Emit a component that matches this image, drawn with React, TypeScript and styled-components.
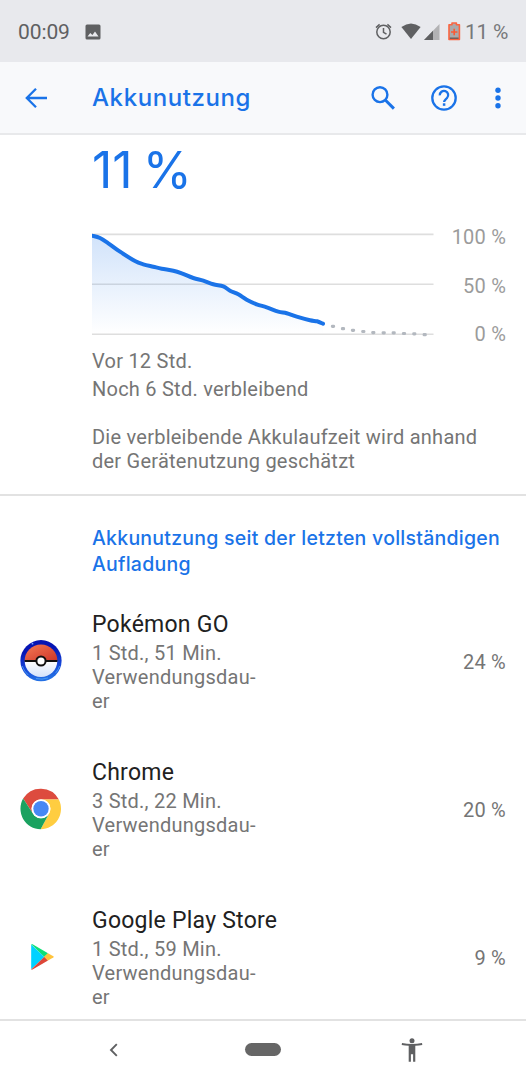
import React from 'react';
import styled, { createGlobalStyle } from 'styled-components';

const BLUE = '#1a73e8';
const GREY = '#5f6062';

const GlobalStyle = createGlobalStyle`
  * { box-sizing: border-box; }
  body { margin: 0; background: #fff; }
`;

const Screen = styled.div`
  width: 526px;
  height: 1080px;
  display: flex;
  flex-direction: column;
  overflow: hidden;
  background: #fff;
  font-family: Roboto, 'Liberation Sans', sans-serif;
`;

const StatusBar = styled.header`
  height: 62px;
  flex: none;
  display: flex;
  align-items: center;
  padding: 1px 18px 0;
  background: #e8e9ed;
  color: #5f6062;
  font-size: 21px;
  line-height: 24px;
`;

const Clock = styled.span`
  letter-spacing: -0.1px;
  width: 67px;
`;

const StatusIcons = styled.div`
  margin-left: auto;
  display: flex;
  align-items: center;
  svg { display: block; }
`;

const Level = styled.span`
  width: 43px;
  white-space: nowrap;
  letter-spacing: -0.3px;
  color: #77787a;
`;

const AppBar = styled.div`
  height: 73px;
  flex: none;
  display: flex;
  align-items: center;
  background: #f8f9fb;
  border-bottom: 2px solid #e8e9eb;
  padding: 1px 12px 0 20px;
  svg { display: block; }
`;

const Title = styled.h1`
  margin: 0 auto 0 40px;
  font: 500 24px/32px Inter, sans-serif;
  letter-spacing: 0.6px;
  color: ${BLUE};
`;

const Action = styled.button<{ $gap?: number }>`
  border: 0;
  padding: 0;
  background: none;
  margin-left: ${(p) => p.$gap ?? 0}px;
`;

const Content = styled.main`
  flex: 1;
  min-height: 0;
  overflow: hidden;
`;

const Summary = styled.section`
  height: 361px;
  padding: 5px 20px 0 92px;
  border-bottom: 2px solid #e2e2e2;
`;

const BigLevel = styled.div`
  font: 400 50px/60px Inter, sans-serif;
  letter-spacing: 0;
  word-spacing: -4px;
  color: ${BLUE};
`;

const ChartRow = styled.div`
  display: flex;
  justify-content: space-between;
  height: 120px;
  margin-top: 25px;
`;

const AxisLabels = styled.div`
  display: flex;
  flex-direction: column;
  justify-content: space-between;
  text-align: right;
  height: 121px;
  color: #9b9b9b;
  font-size: 20px;
  line-height: 24px;
  letter-spacing: 0.2px;
`;

const Line = styled.p<{ $height?: number; $top?: number }>`
  margin: ${(p) => p.$top ?? 0}px 0 0;
  font-size: 20px;
  line-height: ${(p) => p.$height ?? 24}px;
  letter-spacing: 0.24px;
  color: #757575;
  white-space: nowrap;
`;

const SectionTitle = styled.h2`
  margin: 0;
  padding: 29px 0 0 92px;
  height: 91px;
  font: 500 19.5px/26px Inter, sans-serif;
  letter-spacing: 0.25px;
  color: ${BLUE};
  white-space: nowrap;
`;

const AppRow = styled.div`
  height: 148px;
  display: grid;
  grid-template-columns: 72px 1fr auto;
  align-items: center;
  padding: 0 20px;
`;

const AppName = styled.div`
  margin-bottom: 1px;
  font-size: 23px;
  line-height: 30px;
  letter-spacing: 0.24px;
  color: #212121;
`;

const AppIcon = styled.svg`
  display: block;
`;

const Percent = styled.div`
  margin-top: 2px;
  font-size: 20px;
  line-height: 24px;
  letter-spacing: 0.24px;
  color: #757575;
`;

const NavBar = styled.nav`
  height: 61px;
  flex: none;
  display: flex;
  justify-content: space-between;
  align-items: center;
  border-top: 2px solid #e2e2e2;
  padding: 0 103px 2px 105px;
`;

const Pill = styled.div`
  width: 36px;
  height: 13px;
  margin-left: 2px;
  border-radius: 7px;
  background: #666;
`;

const history: [number, number][] = [
  [0, 5.7], [8, 8], [16.3, 13.3], [28, 21.7], [43, 31], [51.3, 34.3], [61.3, 36.7], [69.7, 38.7],
  [81.3, 40.7], [89.7, 43.3], [101.3, 48], [111.3, 50.7], [121.3, 54.3], [131.3, 56.3], [138, 60.7],
  [146.3, 64.3], [154.7, 69.7], [164.7, 74.3], [174.7, 77.3], [186.3, 81.7], [194.7, 83.3],
  [204.7, 86.7], [218, 90.3], [225, 91.3], [231, 93.7],
];

const forecast: [number, number][] = [
  [241, 96.3], [251, 98.7], [261, 100.3], [271.3, 101.5], [281.3, 102.6], [291.7, 102.8],
  [301.7, 102.9], [312, 103.5], [322.3, 103.9], [332.7, 104.7],
];

const smooth = (pts: [number, number][]) =>
  pts.reduce((d, p, i) => {
    if (i === 0) return `M${p[0]} ${p[1]}`;
    const a = pts[Math.max(0, i - 2)];
    const b = pts[i - 1];
    const c = pts[Math.min(pts.length - 1, i + 1)];
    return `${d}C${b[0] + (p[0] - a[0]) / 6} ${b[1] + (p[1] - a[1]) / 6} ${p[0] - (c[0] - b[0]) / 6} ${p[1] - (c[1] - b[1]) / 6} ${p[0]} ${p[1]}`;
  }, '');

const Chart = () => {
  const curve = smooth(history);
  return (
    <svg width="342" height="120" viewBox="0 -5 342 120">
      <defs>
        <linearGradient id="fade" x1="0" y1="0" x2="0" y2="1">
          <stop offset="0" stopColor={BLUE} stopOpacity="0.2" />
          <stop offset="1" stopColor={BLUE} stopOpacity="0" />
        </linearGradient>
        <clipPath id="area"><rect x="0" y="0" width="342" height="115" /></clipPath>
      </defs>
      {[4.4, 54.2, 104.2].map((y) => (
        <line key={y} x1="0" x2="341.5" y1={y} y2={y} stroke="#dedede" strokeWidth="1.6" />
      ))}
      <path d={`${curve}V104H0Z`} fill="url(#fade)" />
      <path d={curve} fill="none" stroke={BLUE} strokeWidth="4" strokeLinecap="round" clipPath="url(#area)" />
      {forecast.map(([x, y]) => (
        <rect key={x} x={x - 2.1} y={y - 1.6} width="4.2" height="3.2" rx="1.4" fill="#b3b8bf" />
      ))}
    </svg>
  );
};

const PokemonIcon = () => (
  <AppIcon width="42" height="42" viewBox="0 0 42 42">
    <defs>
      <linearGradient id="ring" x1="0" y1="0" x2="0.15" y2="1">
        <stop offset="0.3" stopColor="#0615b4" />
        <stop offset="0.7" stopColor="#1545d8" />
        <stop offset="1" stopColor="#2470e4" />
      </linearGradient>
      <linearGradient id="red" x1="0" y1="0" x2="1" y2="1">
        <stop offset="0" stopColor="#f47b55" />
        <stop offset="1" stopColor="#cf3529" />
      </linearGradient>
      <linearGradient id="white" x1="0" y1="0" x2="0" y2="1">
        <stop offset="0" stopColor="#fff" />
        <stop offset="1" stopColor="#d5e3fa" />
      </linearGradient>
    </defs>
    <circle cx="21" cy="20.7" r="20.6" fill="url(#ring)" />
    <path d="M2.3 26a19.5 19.5 0 0 0 6 9M39.6 26a19.5 19.5 0 0 1-4 7M16 38.5q6 1.6 12-.6" fill="none" stroke="#58aef5" strokeWidth="1" strokeOpacity="0.7" />
    <circle cx="12.5" cy="3.7" r="0.9" fill="#7ba5ff" />
    <path d="M4.7 20.7a16.3 16.3 0 0 1 32.6 0z" fill="url(#red)" />
    <path d="M4.7 20.7a16.3 16.3 0 0 0 32.6 0z" fill="url(#white)" />
    <path d="M4.6 21h32.8" stroke="#111" strokeWidth="2" />
    <circle cx="21" cy="21" r="4.6" fill="#fff" stroke="#111" strokeWidth="2" />
  </AppIcon>
);

const ChromeIcon = () => (
  <AppIcon width="42" height="42" viewBox="0 0 42 42">
    <path d="M3.1 10.6A20.6 20.6 0 0 1 38.8 11.4H21A9.4 9.4 0 0 0 12.9 25.5z" fill="#dd4b3e" />
    <path d="M38.8 11.4A20.6 20.6 0 0 1 20.6 41.3L29.1 25.5A9.4 9.4 0 0 0 21 11.4z" fill="#ffcd40" />
    <path d="M3.1 10.6A20.6 20.6 0 0 0 20.6 41.3L29.1 25.5A9.4 9.4 0 0 1 12.9 25.5z" fill="#1aa260" />
    <circle cx="21" cy="20.7" r="9.5" fill="#fff" />
    <circle cx="21" cy="20.7" r="7.7" fill="#4688f4" />
  </AppIcon>
);

const PlayIcon = () => (
  <AppIcon width="42" height="42" viewBox="0 0 42 42">
    <path d="M11.2 8.4L24.4 21 11.2 33.2z" fill="#00d2ff" />
    <path d="M11.2 8.3q.8-.5 1.8.1L28 17.2 24.4 21z" fill="#0ee077" />
    <path d="M11.2 33.4q.8.5 1.8-.1L28 24.5 24.4 20.7z" fill="#dd4638" />
    <path d="M28 17.2l5.3 3q1.2.7 0 1.4L28 24.6l-4-3.8z" fill="#ffc33c" />
  </AppIcon>
);

const apps = [
  { name: 'Pokémon GO', time: '1 Std., 51 Min.', percent: '24 %', Icon: PokemonIcon },
  { name: 'Chrome', time: '3 Std., 22 Min.', percent: '20 %', Icon: ChromeIcon },
  { name: 'Google Play Store', time: '1 Std., 59 Min.', percent: '9 %', Icon: PlayIcon },
];

export default function App() {
  return (
    <Screen>
      <GlobalStyle />
      <StatusBar>
        <Clock>00:09</Clock>
        <svg width="16" height="16" viewBox="0 0 16 16">
          <path fillRule="evenodd" d="M2 .5h12a1.5 1.5 0 0 1 1.5 1.5v12a1.5 1.5 0 0 1-1.5 1.5H2A1.5 1.5 0 0 1 .5 14V2A1.5 1.5 0 0 1 2 .5zM2.5 12.6h11L10 7.6l-2.6 3.3L5.3 8.9z" fill={GREY} />
        </svg>
        <StatusIcons>
          <svg width="90" height="24" viewBox="0 0 90 24">
            <g fill="none" stroke={GREY} strokeWidth="1.5">
              <circle cx="8.5" cy="12" r="6.7" />
              <path d="M8.5 8v4.4l3 1.8M1 7.6l3.6-3.2M16 7.6l-3.6-3.2" />
            </g>
            <path d="M26.4 7q9.6-7 19.2 0L36 19z" fill={GREY} />
            <path d="M64.5 4v16H49z" fill="#b2b2b4" />
            <path d="M58 10.7V20h-9z" fill={GREY} />
            <path d="M77 3h4.4v1.8h3v14.700h-10.400v-14.700h3z" fill="#aaaaac" stroke="#fb6440" strokeWidth="1.6" strokeLinejoin="round" />
            <path d="M74.800 18.200h8.800" stroke="#6a5450" strokeWidth="1.300" />
            <path d="M79.200 8.800v6.400M76 12h6.400" stroke="#fb5a34" strokeWidth="1.6" />
          </svg>
          <Level>11 %</Level>
        </StatusIcons>
      </StatusBar>
      <AppBar>
        <Action aria-label="Zurück">
          <svg width="32" height="32" viewBox="0 0 32 32" fill="none" stroke={BLUE} strokeWidth="2.3">
            <path d="M27 16H7.5M16 6.8L6.8 16l9.2 9.2" />
          </svg>
        </Action>
        <Title>Akkunutzung</Title>
        <Action aria-label="Suchen">
          <svg width="32" height="32" viewBox="0 0 32 32" fill="none" stroke={BLUE}>
            <circle cx="13" cy="12.7" r="7.4" strokeWidth="2.4" />
            <path d="M18.3 18l8.6 8.6" strokeWidth="3" />
          </svg>
        </Action>
        <Action aria-label="Hilfe" $gap={29}>
          <svg width="32" height="32" viewBox="0 0 32 32" fill="none" stroke={BLUE} strokeWidth="2.3">
            <circle cx="16" cy="16" r="11.7" />
            <path d="M11.8 13.4a4.2 4.2 0 1 1 7.2 2.6c-1.6 1.6-2.9 2.1-2.9 4" />
            <path d="M16.1 21.3v2.5" strokeWidth="2.5" />
          </svg>
        </Action>
        <Action aria-label="Mehr" $gap={22}>
          <svg width="32" height="32" viewBox="0 0 32 32" fill={BLUE}>
            <circle cx="16" cy="8.3" r="2.7" />
            <circle cx="16" cy="16" r="2.7" />
            <circle cx="16" cy="23.7" r="2.7" />
          </svg>
        </Action>
      </AppBar>
      <Content>
        <Summary>
          <BigLevel>11 %</BigLevel>
          <ChartRow>
            <Chart />
            <AxisLabels>
              <span>100 %</span>
              <span>50 %</span>
              <span>0 %</span>
            </AxisLabels>
          </ChartRow>
          <Line $height={28} $top={2}>Vor 12 Std.</Line>
          <Line $height={28}>Noch 6 Std. verbleibend</Line>
          <Line $top={22}>Die verbleibende Akkulaufzeit wird anhand</Line>
          <Line>der Gerätenutzung geschätzt</Line>
        </Summary>
        <SectionTitle>Akkunutzung seit der letzten vollständigen<br />Aufladung</SectionTitle>
        {apps.map(({ name, time, percent, Icon }) => (
          <AppRow key={name}>
            <Icon />
            <div>
              <AppName>{name}</AppName>
              <Line>{time}</Line>
              <Line>Verwendungsdau-</Line>
              <Line>er</Line>
            </div>
            <Percent>{percent}</Percent>
          </AppRow>
        ))}
      </Content>
      <NavBar>
        <svg width="18" height="18" viewBox="0 0 18 18" fill="none" stroke={GREY} strokeWidth="1.9">
          <path d="M11.8 3.2L6 9l5.8 5.8" />
        </svg>
        <Pill />
        <svg width="22" height="26" viewBox="0 0 22 26" fill={GREY}>
          <circle cx="11" cy="3.7" r="2.5" />
          <path d="M1 5.9q10 2.2 20 0l.3 2q-3.4.7-7 .9v15.9h-2.2v-7.4H9.9v7.4H7.7V8.8q-3.6-.2-7-.9z" />
        </svg>
      </NavBar>
    </Screen>
  );
}
